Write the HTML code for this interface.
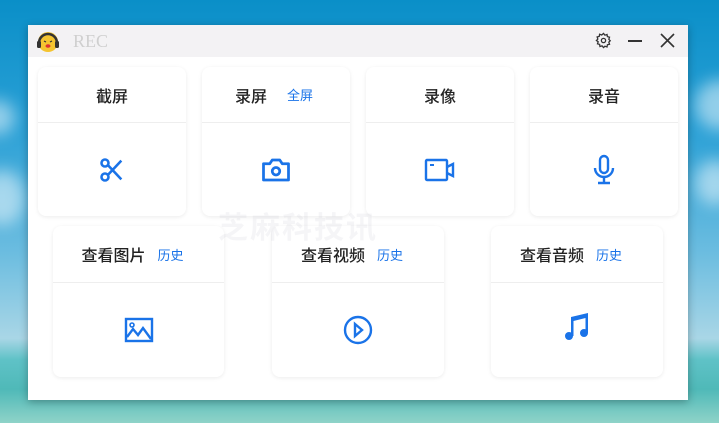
<!DOCTYPE html><html><head><meta charset="utf-8"><style>
*{margin:0;padding:0;box-sizing:border-box}
body{width:719px;height:423px;overflow:hidden;position:relative;font-family:"Liberation Sans","Noto Sans CJK SC",sans-serif;
background:linear-gradient(180deg,#0a8fc8 0%,#2aa0d6 30%,#6cbde0 60%,#a9d6e6 80%,#5fc2c7 85%,#4fb9b8 92%,#8fd3c8 100%)}
.cloud{position:absolute;border-radius:50%;background:rgba(255,255,255,.5);filter:blur(8px)}
.win{position:absolute;left:28px;top:25px;width:660px;height:375px;background:#fff;box-shadow:0 2px 8px rgba(0,0,0,.3)}
.tb{height:32px;background:#f3f2f4;position:relative}
.tb .t{position:absolute;left:45px;top:6px;font-family:"Liberation Serif",serif;font-size:18px;color:#cfcfcf}
.card{position:absolute;background:#fff;border-radius:8px;box-shadow:0 1px 4px rgba(0,0,0,.08)}
.hd{position:absolute;left:0;right:0;top:0;border-bottom:1px solid #eeeeee;display:flex;align-items:center;justify-content:center;font-size:16px;font-weight:500;color:#222}
.hd span{font-size:13px;font-weight:normal;color:#1a73e8;margin-left:12px}
.ic{position:absolute;left:50%;transform:translate(-50%,-50%)}
</style></head><body>
<div class="cloud" style="left:-20px;top:100px;width:35px;height:35px"></div>
<div class="cloud" style="left:-20px;top:170px;width:45px;height:55px"></div>
<div class="cloud" style="left:695px;top:80px;width:50px;height:50px"></div>
<div class="cloud" style="left:695px;top:160px;width:40px;height:45px"></div>
<div class="win">
<div class="tb">
<svg style="position:absolute;left:8px;top:4px" width="24" height="24" viewBox="0 0 24 24"><circle cx="12" cy="13" r="10" fill="#f4c430"/><path d="M3 14a9 9 0 0118 0" stroke="#333" stroke-width="2.5" fill="none"/><rect x="1" y="12" width="4" height="7" rx="1.5" fill="#333"/><rect x="19" y="12" width="4" height="7" rx="1.5" fill="#333"/><path d="M8 12l2 1M16 12l-2 1" stroke="#333" stroke-width="1.2"/><ellipse cx="12" cy="17" rx="2.5" ry="1.8" fill="#d33"/></svg>
<div class="t">REC</div>
<svg style="position:absolute;left:567px;top:7px" width="17" height="17" viewBox="0 0 24 24" fill="none" stroke="#333" stroke-width="1.8"><circle cx="12" cy="12" r="3"/><path d="M12 2l2 2.5 3-1 .5 3 3 .8-1 3 2 2-2 2 1 3-3 .8-.5 3-3-1L12 22l-2-2.5-3 1-.5-3-3-.8 1-3L2 12l2-2-1-3 3-.8.5-3 3 1z"/></svg>
<div style="position:absolute;left:600px;top:15px;width:14px;height:1.5px;background:#333"></div>
<svg style="position:absolute;left:632px;top:8px" width="15" height="15" viewBox="0 0 15 15" stroke="#333" stroke-width="1.6"><path d="M1 1l13 13M14 1L1 14"/></svg>
</div>
<div class="card" style="left:10px;top:42px;width:148px;height:149px"><div class="hd" style="height:56px">截屏</div>
<svg class="ic" style="top:103px" width="28" height="28" viewBox="0 0 24 24" fill="none" stroke="#1a73e8" stroke-width="2.2"><circle cx="6" cy="6" r="3"/><circle cx="6" cy="18" r="3"/><path d="M8.5 7.8L20 20M8.5 16.2L20 4"/></svg></div>
<div class="card" style="left:174px;top:42px;width:148px;height:149px"><div class="hd" style="height:56px;padding-right:4px">录屏<span style="margin-left:20px">全屏</span></div>
<svg class="ic" style="top:103px" width="30" height="28" viewBox="0 0 24 22" fill="none" stroke="#1a73e8" stroke-width="2.2"><path d="M2 6h5l2-3h6l2 3h5v13H2z" stroke-linejoin="round"/><circle cx="12" cy="12" r="3"/></svg></div>
<div class="card" style="left:338px;top:42px;width:148px;height:149px"><div class="hd" style="height:56px">录像</div>
<svg class="ic" style="top:103px" width="32" height="26" viewBox="0 0 32 26" fill="none" stroke="#1a73e8" stroke-width="2.4"><rect x="2" y="3" width="21" height="20" rx="1"/><path d="M23 10l6-3v12l-6-3" /><path d="M6 8h4" stroke-width="2"/></svg></div>
<div class="card" style="left:502px;top:42px;width:148px;height:149px"><div class="hd" style="height:56px">录音</div>
<svg class="ic" style="top:103px" width="26" height="32" viewBox="0 0 26 32" fill="none" stroke="#1a73e8" stroke-width="2.4"><rect x="9" y="2" width="8" height="17" rx="4"/><path d="M4 14a9 9 0 0018 0M13 23v6M7 29h12"/></svg></div>

<div class="card" style="left:25px;top:201px;width:171px;height:151px"><div class="hd" style="height:57px;padding-right:12px">查看图片<span>历史</span></div>
<svg class="ic" style="top:104px" width="30" height="26" viewBox="0 0 30 26" fill="none" stroke="#1a73e8" stroke-width="2.4"><rect x="2" y="2" width="26" height="22"/><circle cx="8" cy="8" r="2" stroke-width="1.6"/><path d="M3 20l6-8 5 6 5-7 8 11"/></svg></div>
<div class="card" style="left:244px;top:201px;width:172px;height:151px"><div class="hd" style="height:57px;padding-right:12px">查看视频<span>历史</span></div>
<svg class="ic" style="top:104px" width="30" height="30" viewBox="0 0 30 30" fill="none" stroke="#1a73e8" stroke-width="2.4"><circle cx="15" cy="15" r="13"/><path d="M12 9l7 6-7 6z"/></svg></div>
<div class="card" style="left:463px;top:201px;width:172px;height:151px"><div class="hd" style="height:57px;padding-right:12px">查看音频<span>历史</span></div>
<svg class="ic" style="top:100px" width="30" height="30" viewBox="0 0 30 30" fill="#1a73e8"><path d="M9 6l17-4v20h-2.5V7L11.5 10V25H9z"/><circle cx="7" cy="25" r="4"/><circle cx="22" cy="22" r="4"/></svg></div>
<div style="position:absolute;left:190px;top:178px;font-size:30px;font-weight:bold;color:rgba(190,190,200,.15);letter-spacing:2px">芝麻科技讯</div>
</div>
</body></html>
